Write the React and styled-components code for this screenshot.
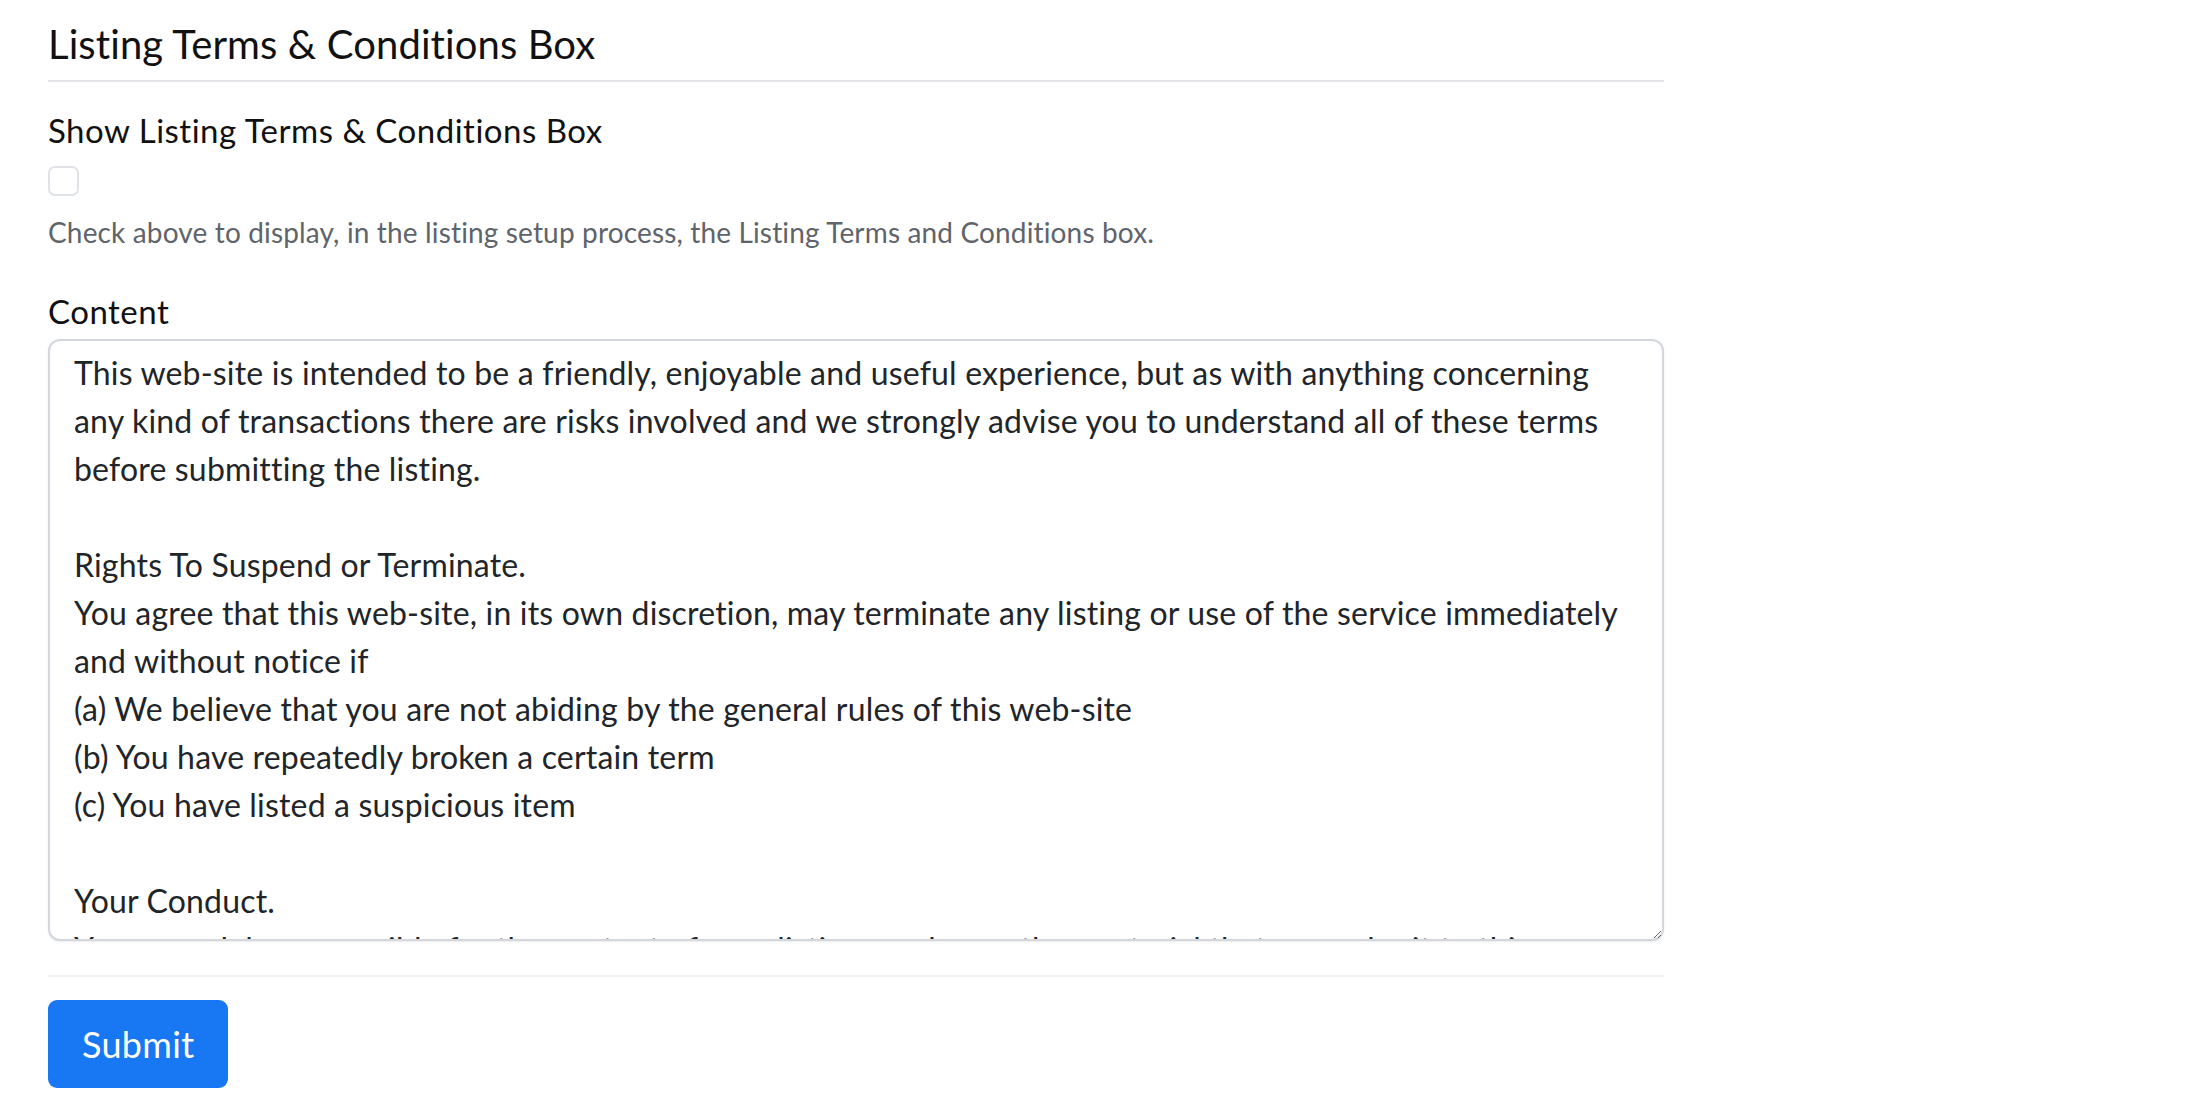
import React from 'react';
import styled, { createGlobalStyle } from 'styled-components';

const Global = createGlobalStyle`
  html, body { margin: 0; padding: 0; background: #ffffff; }
  body {
    font-family: Lato, "Open Sans", "Liberation Sans", sans-serif;
    color: #212529;
  }
  * { box-sizing: border-box; }
`;

const Page = styled.main`
  width: 1664px;
  padding: 20px 0 0 48px;
`;

const Section = styled.section`
  display: flex;
  flex-direction: column;
`;

const SectionTitle = styled.h2`
  margin: 0;
  font-size: 40px;
  font-weight: 400;
  line-height: 48px;
  letter-spacing: 0.1px;
  color: #111;
  padding-bottom: 12px;
  border-bottom: 2px solid #e2e4e8;
`;

const Field = styled.div`
  display: flex;
  flex-direction: column;
  align-items: flex-start;
  margin-top: ${(p) => p.$top || 0}px;
`;

const Label = styled.label`
  font-size: 33px;
  line-height: 48px;
  letter-spacing: 0.5px;
  color: #111;
  margin-bottom: ${(p) => p.$gap || 0}px;
`;

const Check = styled.input.attrs({ type: 'checkbox' })`
  appearance: none;
  margin: 12px 0 0;
  width: 31px;
  height: 30px;
  border: 2px solid #dfe2e6;
  border-radius: 7px;
  background: #fff;
  &:checked { background: #1877f2; border-color: #1877f2; }
`;

const Help = styled.div`
  margin-top: 15px;
  font-size: 28px;
  line-height: 42px;
  letter-spacing: 0.15px;
  color: #5f646b;
`;

const TermsArea = styled.textarea`
  width: 100%;
  height: 602px;
  padding: 8px 24px;
  font-family: inherit;
  font-size: 32px;
  line-height: 48px;
  letter-spacing: 0.18px;
  color: #212529;
  border: 2px solid #d3d7dc;
  border-radius: 12px;
  box-shadow: 0 1px 2px rgba(0, 0, 0, 0.08);
  overflow: hidden;
  resize: both;
  outline: none;
`;

const Divider = styled.hr`
  margin: 34px 0 0;
  border: 0;
  border-top: 2px solid #efefef;
`;

const SubmitButton = styled.button`
  margin-top: 23px;
  height: 88px;
  padding: 0 34px;
  border: none;
  border-radius: 9px;
  background: #1877f2;
  color: #fff;
  font-family: inherit;
  font-size: 36px;
  letter-spacing: 0.3px;
  cursor: pointer;
`;

const TERMS = [
  'This web-site is intended to be a friendly, enjoyable and useful experience, but as with anything concerning',
  'any kind of transactions there are risks involved and we strongly advise you to understand all of these terms',
  'before submitting the listing.',
  '',
  'Rights To Suspend or Terminate.',
  'You agree that this web-site, in its own discretion, may terminate any listing or use of the service immediately',
  'and without notice if',
  '(a) We believe that you are not abiding by the general rules of this web-site',
  '(b) You have repeatedly broken a certain term',
  '(c) You have listed a suspicious item',
  '',
  'Your Conduct.',
  'You are solely responsible for the content of your listings and any other material that you submit to this',
  'web-site.',
].join('\n');

export default function App() {
  return (
    <>
      <Global />
      <Page>
        <Section>
          <SectionTitle>Listing Terms &amp; Conditions Box</SectionTitle>
          <Field $top={24}>
            <Label htmlFor="show-terms">Show Listing Terms &amp; Conditions Box</Label>
            <Check id="show-terms" />
            <Help>Check above to display, in the listing setup process, the Listing Terms and Conditions box.</Help>
          </Field>
          <Field $top={34}>
            <Label htmlFor="terms-content" $gap={4}>Content</Label>
            <TermsArea id="terms-content" defaultValue={TERMS} />
          </Field>
          <Divider />
          <div>
            <SubmitButton type="submit">Submit</SubmitButton>
          </div>
        </Section>
      </Page>
    </>
  );
}
